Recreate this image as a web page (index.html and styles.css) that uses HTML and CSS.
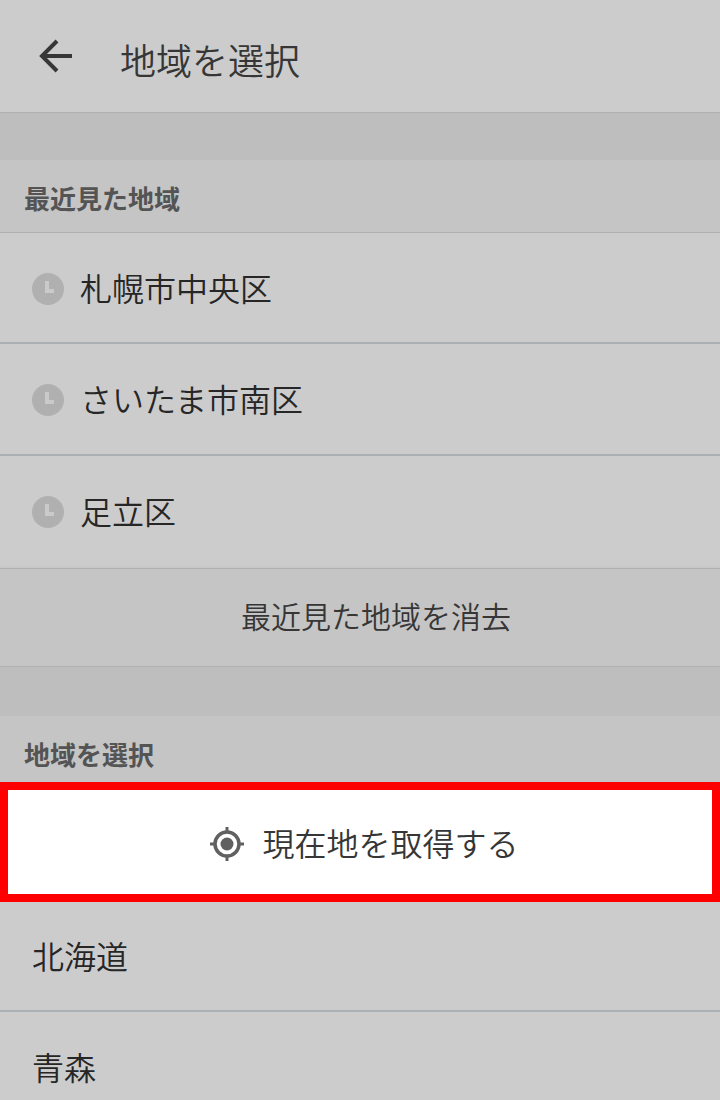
FILE: index.html
```html
<!DOCTYPE html>
<html lang="ja">
<head>
    <meta charset="UTF-8">
    <meta name="viewport" content="width=device-width, initial-scale=1.0">
    <title>地域を選択</title>
    <link rel="stylesheet" href="styles.css">
</head>
<body>

    <!-- Header -->
    <header class="header">
        <button type="button" class="back-button" aria-label="戻る">
            <svg width="34" height="34" viewBox="0 0 34 34" fill="none" stroke="#363636" stroke-width="4">
                <path d="M19 2 L4 17 L19 32 M3 17 H34"/>
            </svg>
        </button>
        <h1>地域を選択</h1>
    </header>

    <!-- Recent areas -->
    <section class="recent">
        <h2>最近見た地域</h2>
        <ul class="area-list">
            <li>
                <a href="#">
                    <svg class="clock" viewBox="0 0 32 32"><circle cx="16" cy="16" r="16" fill="#b0b0b0"/><path d="M15 8 V18 H22" fill="none" stroke="#cacaca" stroke-width="4"/></svg>
                    <span>札幌市中央区</span>
                </a>
            </li>
            <li>
                <a href="#">
                    <svg class="clock" viewBox="0 0 32 32"><circle cx="16" cy="16" r="16" fill="#b0b0b0"/><path d="M15 8 V18 H22" fill="none" stroke="#cacaca" stroke-width="4"/></svg>
                    <span>さいたま市南区</span>
                </a>
            </li>
            <li>
                <a href="#">
                    <svg class="clock" viewBox="0 0 32 32"><circle cx="16" cy="16" r="16" fill="#b0b0b0"/><path d="M15 8 V18 H22" fill="none" stroke="#cacaca" stroke-width="4"/></svg>
                    <span>足立区</span>
                </a>
            </li>
        </ul>
        <button type="button" class="clear-button">最近見た地域を消去</button>
    </section>

    <!-- Area selection -->
    <section class="select">
        <h2>地域を選択</h2>
        <button type="button" class="locate-button">
            <svg width="36" height="36" viewBox="0 0 36 36" fill="none" stroke="#606060">
                <circle cx="18" cy="18" r="12" stroke-width="3.5"/>
                <circle cx="18" cy="18" r="6.5" fill="#606060" stroke="none"/>
                <path d="M18 1 V6 M18 30 V35 M1 18 H6 M30 18 H35" stroke-width="3"/>
            </svg>
            <span>現在地を取得する</span>
        </button>
        <ul class="area-list">
            <li><a href="#"><span>北海道</span></a></li>
            <li><a href="#"><span>青森</span></a></li>
        </ul>
    </section>

</body>
</html>
```
FILE: styles.css
```css
/* General Styling */
* {
    box-sizing: border-box;
}
body {
    margin: 0;
    font-family: "Noto Sans CJK JP", sans-serif;
    font-weight: 350;
    color: #262626;
    background: #bebebe;
}
h1, h2, ul {
    margin: 0;
    padding: 0;
}
button {
    font-family: inherit;
    font-weight: inherit;
    color: #363636;
    border: none;
    cursor: pointer;
}
/* Header */
.header {
    display: flex;
    align-items: center;
    height: 113px;
    padding-left: 38px;
    background: #ccc;
    border-bottom: 1px solid #b0b0b0;
}
.back-button {
    display: flex;
    padding: 0;
    background: none;
}
.header h1 {
    margin-left: 48px;
    padding-top: 6px;
    font-size: 36px;
    line-height: 48px;
    font-weight: inherit;
    color: #363636;
}
/* Section titles */
.recent {
    margin-top: 47px;
}
.select {
    margin-top: 49px;
}
h2 {
    height: 72px;
    padding-left: 24px;
    font-size: 26px;
    line-height: 76px;
    font-weight: bold;
    color: #545454;
    background: #c5c5c5;
}
.select h2 {
    height: 66px;
}
/* Area lists */
.area-list {
    list-style: none;
    background: #ccc;
}
.recent .area-list {
    border-top: 1px solid #b0b0b0;
}
.area-list a {
    display: flex;
    align-items: center;
    gap: 16px;
    height: 112px;
    padding: 2px 32px 0;
    font-size: 32px;
    line-height: 48px;
    color: inherit;
    text-decoration: none;
    border-bottom: 2px solid #abb0b4;
}
.area-list span {
    padding-bottom: 4px;
}
.recent li:first-child a {
    height: 111px;
}
.select li:first-child a {
    height: 110px;
}
.recent li:last-child a {
    border-bottom-color: #c8c8c8;
}
.clock {
    width: 32px;
    height: 32px;
}
/* Buttons */
.clear-button {
    display: block;
    width: 100%;
    height: 99px;
    padding: 0 0 6px 32px;
    font-size: 30px;
    background: #c5c5c5;
    border-top: 1px solid #b0b0b0;
    border-bottom: 1px solid #b0b0b0;
}
.locate-button {
    display: flex;
    align-items: center;
    justify-content: center;
    gap: 17px;
    width: 100%;
    height: 120px;
    padding: 4px 0 0 8px;
    font-size: 32px;
    line-height: 48px;
    background: #fff;
    border: 8px solid #f00;
}
.locate-button span {
    padding-bottom: 4px;
}
```
